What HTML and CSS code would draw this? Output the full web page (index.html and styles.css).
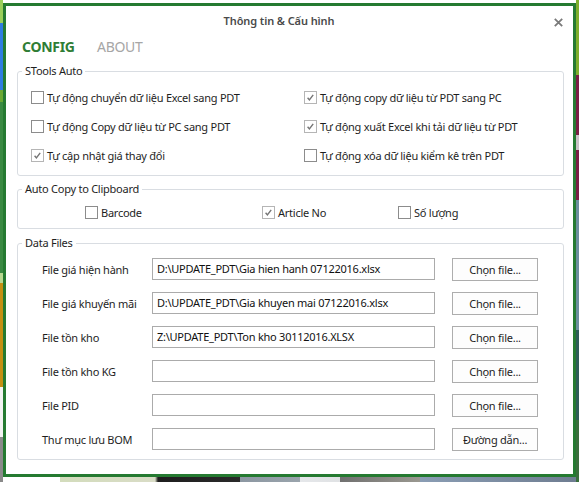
FILE: index.html
```html
<!DOCTYPE html>
<html lang="vi">
<head>
<meta charset="utf-8">
<title>Thông tin &amp; Cấu hình</title>
<link rel="stylesheet" href="styles.css">
</head>
<body>
<div class="window">
  <div class="titlebar">
    <span class="title">Thông tin &amp; Cấu hình</span>
    <span class="close"><svg width="9" height="9" viewBox="0 0 9 9"><path d="M0.8 0.8 L8.2 8.2 M8.2 0.8 L0.8 8.2" stroke="#7a7a7a" stroke-width="1.8" fill="none"/></svg></span>
  </div>
  <div class="tabs">
    <span class="tab active">CONFIG</span>
    <span class="tab">ABOUT</span>
  </div>

  <fieldset class="group g-auto">
    <legend>STools Auto</legend>
    <div class="cb-grid">
      <label class="cb"><span class="box"></span>Tự động chuyển dữ liệu Excel sang PDT</label>
      <label class="cb"><span class="box checked"><svg width="11" height="11" viewBox="0 0 11 11"><path d="M2.6 5.8 L4.4 7.9 L8.2 2.8" stroke="#757575" stroke-width="1.4" fill="none"/></svg></span>Tự động copy dữ liệu từ PDT sang PC</label>
      <label class="cb"><span class="box"></span>Tự động Copy dữ liệu từ PC sang PDT</label>
      <label class="cb"><span class="box checked"><svg width="11" height="11" viewBox="0 0 11 11"><path d="M2.6 5.8 L4.4 7.9 L8.2 2.8" stroke="#757575" stroke-width="1.4" fill="none"/></svg></span>Tự động xuất Excel khi tải dữ liệu từ PDT</label>
      <label class="cb"><span class="box checked"><svg width="11" height="11" viewBox="0 0 11 11"><path d="M2.6 5.8 L4.4 7.9 L8.2 2.8" stroke="#757575" stroke-width="1.4" fill="none"/></svg></span>Tự cập nhật giá thay đổi</label>
      <label class="cb"><span class="box"></span>Tự động xóa dữ liệu kiểm kê trên PDT</label>
    </div>
  </fieldset>

  <fieldset class="group g-copy">
    <legend>Auto Copy to Clipboard</legend>
    <div class="copy-row">
      <label class="cb"><span class="box"></span>Barcode</label>
      <label class="cb"><span class="box checked"><svg width="11" height="11" viewBox="0 0 11 11"><path d="M2.6 5.8 L4.4 7.9 L8.2 2.8" stroke="#757575" stroke-width="1.4" fill="none"/></svg></span>Article No</label>
      <label class="cb"><span class="box"></span>Số lượng</label>
    </div>
  </fieldset>

  <fieldset class="group g-files">
    <legend>Data Files</legend>
    <div class="file-rows">
      <div class="file-row"><span class="flabel">File giá hiện hành</span><span class="field">D:\UPDATE_PDT\Gia hien hanh 07122016.xlsx</span><span class="btn">Chọn file...</span></div>
      <div class="file-row"><span class="flabel">File giá khuyến mãi</span><span class="field">D:\UPDATE_PDT\Gia khuyen mai 07122016.xlsx</span><span class="btn">Chọn file...</span></div>
      <div class="file-row"><span class="flabel">File tồn kho</span><span class="field">Z:\UPDATE_PDT\Ton kho 30112016.XLSX</span><span class="btn">Chọn file...</span></div>
      <div class="file-row"><span class="flabel">File tồn kho KG</span><span class="field"></span><span class="btn">Chọn file...</span></div>
      <div class="file-row"><span class="flabel">File PID</span><span class="field"></span><span class="btn">Chọn file...</span></div>
      <div class="file-row"><span class="flabel">Thư mục lưu BOM</span><span class="field"></span><span class="btn">Đường dẫn...</span></div>
    </div>
  </fieldset>
</div>
</body>
</html>
```

FILE: styles.css
```css
html, body {
  margin: 0;
}
body {
  width: 579px;
  height: 482px;
  box-sizing: border-box;
  padding: 3px 0 0 3px;
  overflow: hidden;
  font-family: "Noto Sans", "Open Sans", sans-serif;
  font-size: 11px;
  letter-spacing: -0.25px;
  color: #1e1e1e;
  background:
    linear-gradient(to bottom, #9bcf5a 0, #9bcf5a 23px, #2f7be0 23px, #2f7be0 90px, #6aa832 90px, #6aa832 102px, #3a8a42 102px, #3a8a42 273px, #b8d890 273px, #b8d890 283px, #c48f12 283px, #c48f12 387px, #f2f2f2 387px, #f2f2f2 437px, #8a8a8a 437px) left top / 3px 100% no-repeat,
    linear-gradient(to bottom, #7fae2c 0, #7fae2c 75px, #7a1f45 75px, #7a1f45 135px, #c9c0c6 135px, #c9c0c6 150px, #7a1f45 150px, #7a1f45 200px, #6d8e9e 200px, #6d8e9e 330px, #2f5e58 330px, #2f5e58 420px, #3b6f3d 420px) right top / 3px 100% no-repeat,
    linear-gradient(to right, #8a8a8a 0, #8a8a8a 3px, #ffffff 3px, #ffffff 60px, #d3dcbc 60px, #d9dcc6 155px, #1e1e1e 158px, #2a2a2a 240px, #8c97a2 240px, #9aa4ac 300px, #e5e7ea 300px, #e0e2e4 340px, #707070 340px, #9a9890 420px, #8a9db4 420px, #6e7c90 579px) left bottom / 100% 5px no-repeat,
    #ffffff;
}

.window {
  width: 573px;
  height: 474px;
  box-sizing: border-box;
  border: 3px solid #257a31;
  background: #fff;
}

.titlebar {
  display: flex;
  align-items: center;
  height: 28px;
}
.title {
  flex: 1;
  text-align: center;
  font-size: 11px;
  font-weight: 600;
  letter-spacing: -0.1px;
  color: #4a4a4a;
}
.close {
  display: flex;
  align-items: center;
  justify-content: center;
  width: 12px;
  height: 12px;
  margin-right: 9px;
  margin-top: 4px;
}

.tabs {
  display: flex;
  height: 26px;
  line-height: 26px;
  padding-left: 16px;
  font-size: 14px;
  letter-spacing: -0.3px;
}
.tab {
  color: #a6a6a6;
}
.tab.active {
  width: 75px;
  color: #2f7d35;
  font-weight: 700;
}

.group {
  margin: 3px 9px 0 11px;
  padding: 0;
  border: 1px solid #d9dde2;
  border-radius: 3px;
  min-inline-size: 0;
}
.group legend {
  margin-left: 4px;
  padding: 0 3px;
  line-height: 16px;
  color: #1e1e1e;
}

.cb {
  display: flex;
  align-items: center;
  white-space: nowrap;
}
.box {
  display: flex;
  align-items: center;
  justify-content: center;
  width: 13px;
  height: 13px;
  box-sizing: border-box;
  margin-right: 3px;
  border: 1px solid #8c8c8c;
  background: #fff;
}
.box.checked {
  border-color: #b5b5b5;
}

.cb-grid {
  display: grid;
  grid-template-columns: 273px 1fr;
  grid-auto-rows: 29px;
  padding: 4px 0 5px 13px;
}

.g-copy {
  margin-top: 5px;
}
.copy-row {
  display: grid;
  grid-template-columns: 177px 136px 1fr;
  height: 24px;
  padding: 3px 0 4px 67px;
}

.g-files {
  margin-top: 6px;
}
.file-rows {
  display: flex;
  flex-direction: column;
  gap: 12px;
  padding: 7px 0 9px 24px;
}
.file-row {
  display: flex;
  align-items: center;
  height: 22px;
}
.flabel {
  width: 110px;
  flex: none;
}
.field {
  width: 283px;
  height: 22px;
  box-sizing: border-box;
  flex: none;
  border: 1px solid #ababab;
  padding-left: 4px;
  line-height: 19px;
  color: #111;
  white-space: nowrap;
  overflow: hidden;
}
.btn {
  width: 86px;
  height: 23px;
  box-sizing: border-box;
  flex: none;
  margin-left: 17px;
  border: 1px solid #adadad;
  background: #fdfdfd;
  text-align: center;
  line-height: 21px;
  color: #1e1e1e;
}
```
